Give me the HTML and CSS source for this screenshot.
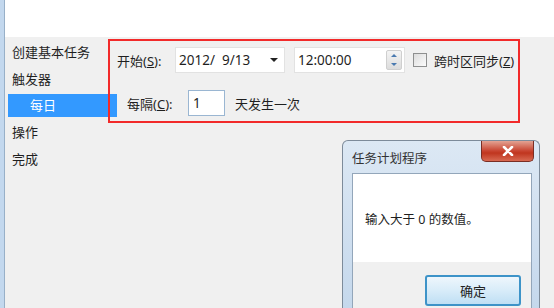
FILE: index.html
```html
<!DOCTYPE html>
<html>
  <head>
    <meta charset="UTF-8">
    <title>创建基本任务</title>
    <link rel="stylesheet" href="styles.css">
  </head>
  <body>
    <div class="app">
      <div class="edge"></div>
      <div class="page">
        <div class="header"></div>
        <div class="main">
          <ul class="nav">
            <li>创建基本任务</li>
            <li>触发器</li>
            <li class="selected">每日</li>
            <li>操作</li>
            <li>完成</li>
          </ul>
          <div class="form">
            <div class="row">
              <span class="label start-label">开始(<u>S</u>):</span>
              <div class="field date-field">
                <span>2012/&nbsp;&nbsp;9/13</span>
                <span class="arrow"></span>
              </div>
              <div class="field time-field">
                <span>12:00:00</span>
                <span class="spin">
                  <span class="up"></span>
                  <span class="down"></span>
                </span>
              </div>
              <span class="checkbox"></span>
              <span class="label">跨时区同步(<u>Z</u>)</span>
            </div>
            <div class="row second">
              <span class="label every-label">每隔(<u>C</u>):</span>
              <div class="field count-field">1</div>
              <span class="label">天发生一次</span>
            </div>
          </div>
        </div>
      </div>
    </div>

    <!-- annotation drawn over the trigger settings -->
    <div class="highlight"></div>

    <div class="dialog">
      <div class="titlebar">
        <span class="title">任务计划程序</span>
        <span class="close">
          <svg width="12" height="10" viewBox="0 0 12 10">
            <path d="M2 1 L10 9 M10 1 L2 9" stroke="#fff" stroke-width="2.6" stroke-linecap="round"/>
          </svg>
        </span>
      </div>
      <div class="panel">
        <div class="message">输入大于 0 的数值。</div>
        <div class="buttons">
          <button class="ok">确定</button>
        </div>
      </div>
    </div>
  </body>
</html>
```

FILE: styles.css
```css
* {
    box-sizing: border-box;
}
body {
    margin: 0;
    width: 554px;
    height: 308px;
    overflow: hidden;
    background: #f0f0f0;
    font-family: "Noto Sans", "Noto Sans CJK SC", sans-serif;
    font-size: 13px;
    color: #1f1f1f;
    position: relative;
}
.app {
    display: flex;
    height: 308px;
}
.edge {
    width: 5px;
    background: #c3d8ee;
    border-right: 1px solid #98b0c8;
}
.page {
    flex: 1;
}
.header {
    height: 37px;
    background: #fff;
}
.main {
    display: flex;
}
.nav {
    list-style: none;
    margin: 0;
    padding: 3px 0 0 0;
    width: 112px;
}
.nav li {
    height: 24px;
    line-height: 24px;
    padding-left: 7px;
    margin-bottom: 3px;
    white-space: nowrap;
}
.nav li.selected {
    margin-left: 3px;
    padding-left: 22px;
    height: 23px;
    line-height: 23px;
    background: #3399ff;
    color: #fff;
}
.form {
    padding-top: 10px;
}
.row {
    display: flex;
    align-items: center;
    height: 26px;
}
.row.second {
    margin-top: 17px;
    padding-left: 10px;
}
.label {
    white-space: nowrap;
}
.start-label {
    width: 58px;
}
.every-label {
    width: 61px;
}
.field {
    height: 26px;
    background: #fff;
    border: 1px solid #e2e2e2;
    display: flex;
    align-items: center;
    padding-left: 3px;
    font-size: 13.5px;
}
.date-field {
    width: 110px;
    justify-content: space-between;
    padding-right: 6px;
}
.arrow {
    width: 0;
    height: 0;
    border-left: 4px solid transparent;
    border-right: 4px solid transparent;
    border-top: 4px solid #222;
}
.time-field {
    width: 111px;
    margin-left: 9px;
    justify-content: space-between;
    padding-right: 2px;
}
.spin {
    width: 16px;
    height: 20px;
    display: flex;
    flex-direction: column;
    align-items: center;
    justify-content: space-around;
    background: linear-gradient(#f4f4f4, #dcdcdc);
    border: 1px solid #cfcfcf;
    border-radius: 2px;
}
.spin .up {
    border-left: 3px solid transparent;
    border-right: 3px solid transparent;
    border-bottom: 3px solid #4a7ab0;
}
.spin .down {
    border-left: 3px solid transparent;
    border-right: 3px solid transparent;
    border-top: 3px solid #4a7ab0;
}
.checkbox {
    width: 14px;
    height: 14px;
    margin: 0 7px 0 8px;
    border: 1px solid #8e8f8f;
    background: linear-gradient(135deg, #dcdcdc, #fbfbfb);
}
.count-field {
    width: 37px;
    margin-right: 10px;
    border-color: #9ab6d2;
    padding-left: 4px;
}
.highlight {
    position: absolute;
    left: 108px;
    top: 39px;
    width: 412px;
    height: 84px;
    border: 2px solid #f22a2a;
}
.dialog {
    position: absolute;
    left: 342px;
    top: 140px;
    width: 198px;
    height: 168px;
    overflow: hidden;
    border: 1px solid #7d8b9a;
    border-bottom: none;
    border-radius: 6px 6px 0 0;
    background: linear-gradient(#dce8f4, #c5d8ec);
    padding: 0 7px 0 9px;
}
.titlebar {
    display: flex;
    justify-content: space-between;
    height: 32px;
}
.title {
    padding-top: 7px;
    font-size: 12.5px;
    color: #333;
}
.close {
    width: 53px;
    height: 21px;
    margin-right: -2px;
    border: 1px solid #7a2e24;
    border-top: none;
    border-radius: 0 0 5px 5px;
    background: linear-gradient(#e3a393, #c8432f 50%, #c0361f 60%, #d86a52);
    display: flex;
    align-items: center;
    justify-content: center;
}
.panel {
    height: 135px;
    border: 1px solid #93a6ba;
    border-bottom: none;
    background: #f0f0f0;
}
.message {
    height: 88px;
    background: #fff;
    padding: 35px 0 0 12px;
    font-size: 12.5px;
}
.buttons {
    display: flex;
    justify-content: flex-end;
    padding: 13px 10px 0 0;
}
.ok {
    width: 96px;
    height: 31px;
    font-family: inherit;
    font-size: 13px;
    color: #222;
    border: 2px solid #3d93c8;
    border-radius: 3px;
    background: linear-gradient(#eef6fc, #d8ecf9 50%, #bfdff4);
}
```
